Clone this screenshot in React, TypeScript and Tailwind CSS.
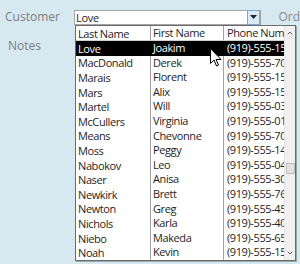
import { ChevronDown, ChevronUp } from "lucide-react";

const rows = [
  ["Love", "Joakim", "(919)-555-1534"],
  ["MacDonald", "Derek", "(919)-555-7012"],
  ["Marais", "Florent", "(919)-555-1598"],
  ["Mars", "Alix", "(919)-555-1523"],
  ["Martel", "Will", "(919)-555-0345"],
  ["McCullers", "Virginia", "(919)-555-0122"],
  ["Means", "Chevonne", "(919)-555-7034"],
  ["Moss", "Peggy", "(919)-555-1456"],
  ["Nabokov", "Leo", "(919)-555-0467"],
  ["Naser", "Anisa", "(919)-555-3012"],
  ["Newkirk", "Brett", "(919)-555-7623"],
  ["Newton", "Greg", "(919)-555-4590"],
  ["Nichols", "Karla", "(919)-555-4023"],
  ["Niebo", "Makeda", "(919)-555-6578"],
  ["Noah", "Kevin", "(919)-555-1534"],
];

export default function App() {
  return (
    <div
      className="relative h-[264px] w-[300px] overflow-hidden bg-[#d6e8f0] text-[11px] text-[#1e1e1e]"
      style={{ fontFamily: "'Open Sans', Lato, sans-serif" }}
    >
      {/* Form fields */}
      <div className="flex items-center pt-[8px]">
        <span className="w-[75px] pl-[5px] text-[12px] text-[#7f7f7f]">Customer</span>
        <div className="flex h-[15px] w-[190px] items-center border border-[#a5a5a5] bg-white">
          <span className="flex-1 pl-[1px] leading-none tracking-[-0.3px]">Love</span>
          <div className="flex h-[15px] w-[13px] items-center justify-center border border-[#7aa7d6] bg-[#d9ebfa]">
            <svg width="7" height="4" viewBox="0 0 7 4">
              <path d="M0 0h7L3.5 4z" fill="#222" />
            </svg>
          </div>
        </div>
        <span className="ml-[17px] text-[12px] text-[#8a8a8a]">Ord</span>
      </div>
      <div className="pl-[8px] pt-[11px] text-[12px] text-[#7f7f7f]">Notes</div>

      {/* Dropdown list */}
      <div className="absolute left-[75px] top-[25px] flex h-[236px] w-[221px] border border-[#6b6b6b] bg-white tracking-[-0.4px] shadow-[1px_1px_0_#9aa]">
        <div className="flex flex-1 flex-col overflow-hidden">
          <div className="flex h-[15px] shrink-0 items-center border-b border-[#d0d0d0]">
            <span className="w-[74px] shrink-0 pl-[2px] leading-none">Last Name</span>
            <span className="h-full w-[73px] shrink-0 border-l border-[#a0a0a0] pl-[2px] leading-[14px]">First Name</span>
            <span className="h-full flex-1 overflow-hidden whitespace-nowrap border-l border-[#a0a0a0] pl-[3px] leading-[14px]">Phone Number</span>
          </div>
          {rows.map((r, i) => (
            <div
              key={i}
              className={`flex h-[14.6px] shrink-0 items-center ${i === 0 ? "bg-black text-white" : ""}`}
            >
              <span className="w-[74px] shrink-0 pl-[2px] leading-none">{r[0]}</span>
              <span className={`h-full w-[73px] shrink-0 border-l pl-[2px] leading-[14.6px] ${i === 0 ? "border-black" : "border-[#a0a0a0]"}`}>{r[1]}</span>
              <span className={`h-full flex-1 overflow-hidden whitespace-nowrap border-l pl-[3px] leading-[14.6px] ${i === 0 ? "border-black" : "border-[#a0a0a0]"}`}>{r[2]}</span>
            </div>
          ))}
          <div className="flex flex-1">
            <span className="w-[74px] shrink-0" />
            <span className="w-[73px] shrink-0 border-l border-[#a0a0a0]" />
            <span className="flex-1 border-l border-[#a0a0a0]" />
          </div>
        </div>
        {/* Scrollbar */}
        <div className="flex w-[11px] flex-col border-l border-[#e3e3e3] bg-[#f0f0f0]">
          <div className="flex h-[14px] items-center justify-center">
            <ChevronUp size={8} strokeWidth={3} className="text-[#606060]" />
          </div>
          <div className="flex-1 pt-[123px]">
            <div className="mx-auto h-[11px] w-[9px] border border-[#bcbcbc] bg-[#e2e2e2]" />
          </div>
          <div className="flex h-[14px] items-center justify-center">
            <ChevronDown size={8} strokeWidth={3} className="text-[#606060]" />
          </div>
        </div>
      </div>

      {/* Mouse cursor */}
      <svg className="absolute left-[210px] top-[48px]" width="12" height="19" viewBox="0 0 12 19">
        <path d="M0.5 0.5v15l3.5-3.5 2.5 6 2-1-2.5-5.5h5z" fill="#fff" stroke="#000" strokeWidth="1" />
      </svg>
    </div>
  );
}
